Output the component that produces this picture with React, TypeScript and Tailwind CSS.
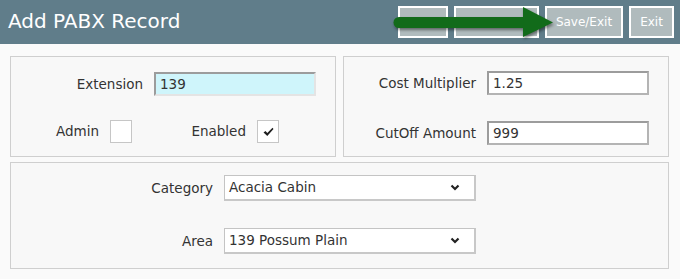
import React from 'react';

const font = { fontFamily: '"DejaVu Sans", Verdana, sans-serif' };

function Checkbox({ checked }: { checked?: boolean }) {
  return (
    <div className="w-[22px] h-[23px] bg-white border border-[#c6c6c6] flex items-center justify-center">
      {checked && (
        <svg width="11" height="10" viewBox="0 0 11 10">
          <path d="M0.5 5.5 L2.5 4 L4.3 6 L9.5 0.8 L10.5 2 L4.3 9 Z" fill="#1f1f1f" />
        </svg>
      )}
    </div>
  );
}

function TextInput({ value, highlight }: { value: string; highlight?: boolean }) {
  return (
    <div
      className={`w-[162px] h-[24px] flex items-center pl-[4px] text-[13.5px] text-[#333] border-2 border-t-[#9c9c9c] border-l-[#9c9c9c] ${
        highlight ? 'bg-[#cff5fb] border-b-[#e4e4e4] border-r-[#e4e4e4]' : 'bg-white border-b-[#b4b4b4] border-r-[#b4b4b4]'
      }`}
    >
      {value}
    </div>
  );
}

function SelectBox({ value }: { value: string }) {
  return (
    <div className="w-[252px] h-[26px] bg-white flex items-center justify-between pl-[4px] pr-[14px] text-[13.5px] text-[#333] border border-[#c4c4c4] border-b-2 border-r-2 border-b-[#c8c8c8] border-r-[#c8c8c8]">
      <span>{value}</span>
      <svg width="10" height="7" viewBox="0 0 10 7">
        <path d="M1.5 1.5 L5 5 L8.5 1.5" fill="none" stroke="#222" strokeWidth="2.2" />
      </svg>
    </div>
  );
}

export default function App() {
  return (
    <div className="w-[680px] h-[279px] bg-[#fafafa] relative overflow-hidden" style={font}>
      {/* Header */}
      <div className="h-[44px] bg-[#607d8a] flex items-center justify-between pl-[8px] pr-[6px]">
        <h1 className="text-white text-[20px] leading-none pb-[2px]">Add PABX Record</h1>
        <div className="flex items-center gap-[6px]">
          <button className="w-[50px] h-[32px] bg-[#b0bbbd] border-2 border-white" />
          <button className="w-[85px] h-[32px] bg-[#b0bbbd] border-2 border-white" />
          <button className="w-[78px] h-[32px] bg-[#b0bbbd] border-2 border-white text-white text-[12px]">Save/Exit</button>
          <button className="w-[45px] h-[32px] bg-[#b0bbbd] border-2 border-white text-white text-[12px]">Exit</button>
        </div>
      </div>

      {/* Green arrow overlay */}
      <svg className="absolute left-[385px] top-0" width="180" height="44" viewBox="0 0 180 44" style={{ filter: 'drop-shadow(1px 2px 1.5px rgba(0,0,0,0.45))' }}>
        <line x1="14" y1="22.5" x2="142" y2="22.5" stroke="#126b1a" strokeWidth="11" strokeLinecap="round" />
        <polygon points="138,7 168,22.5 138,37" fill="#126b1a" />
      </svg>

      <div className="px-[10px] pt-[12px] flex flex-col gap-[5px] text-[13.5px] text-[#333]">
        <div className="flex gap-[7px]">
          {/* Panel 1 */}
          <div className="w-[326px] h-[101px] bg-[#f8f8f8] border border-[#cfcfcf] pt-[15px]">
            <div className="flex items-center">
              <span className="w-[132px] text-right">Extension</span>
              <div className="ml-[11px]">
                <TextInput value="139" highlight />
              </div>
            </div>
            <div className="flex items-center mt-[24px]">
              <span className="w-[88px] text-right">Admin</span>
              <div className="ml-[11px]">
                <Checkbox />
              </div>
              <span className="w-[114px] text-right">Enabled</span>
              <div className="ml-[11px]">
                <Checkbox checked />
              </div>
            </div>
          </div>
          {/* Panel 2 */}
          <div className="w-[326px] h-[101px] bg-[#f8f8f8] border border-[#cfcfcf] pt-[14px]">
            <div className="flex items-center">
              <span className="w-[132px] text-right">Cost Multiplier</span>
              <div className="ml-[11px]">
                <TextInput value="1.25" />
              </div>
            </div>
            <div className="flex items-center mt-[26px]">
              <span className="w-[132px] text-right">CutOff Amount</span>
              <div className="ml-[11px]">
                <TextInput value="999" />
              </div>
            </div>
          </div>
        </div>

        {/* Panel 3 */}
        <div className="w-[659px] h-[107px] bg-[#f8f8f8] border border-[#cfcfcf] pt-[12px]">
          <div className="flex items-center">
            <span className="w-[202px] text-right">Category</span>
            <div className="ml-[11px]">
              <SelectBox value="Acacia Cabin" />
            </div>
          </div>
          <div className="flex items-center mt-[27px]">
            <span className="w-[202px] text-right">Area</span>
            <div className="ml-[11px]">
              <SelectBox value="139 Possum Plain" />
            </div>
          </div>
        </div>
      </div>
    </div>
  );
}
